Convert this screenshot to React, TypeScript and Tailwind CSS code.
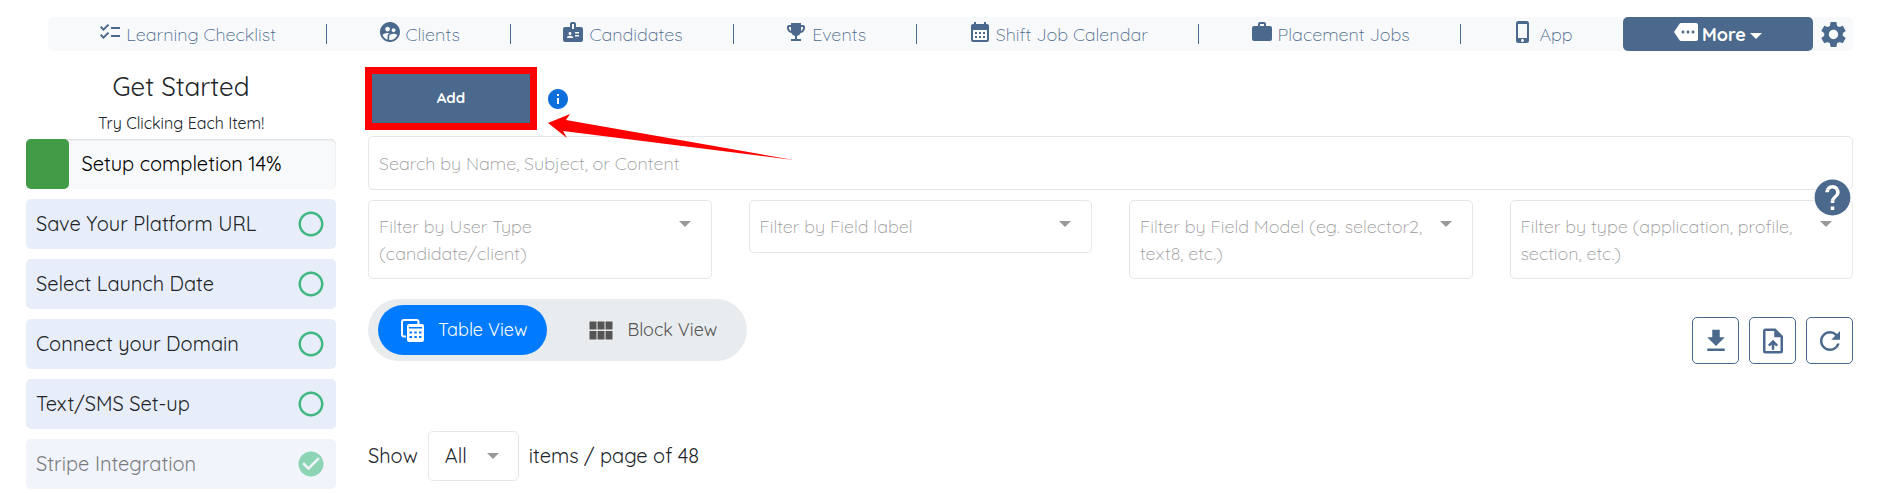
import type { ReactNode } from 'react';
import { useState } from 'react';
import {
  MdBadge,
  MdCalendarMonth,
  MdCheckCircle,
  MdChecklist,
  MdEmojiEvents,
  MdFileDownload,
  MdHelp,
  MdInfo,
  MdMore,
  MdPhoneIphone,
  MdRadioButtonUnchecked,
  MdRefresh,
  MdSettings,
  MdSupervisedUserCircle,
} from 'react-icons/md';

const navItems = [
  { label: 'Learning Checklist', icon: <MdChecklist size={24} /> },
  { label: 'Clients', icon: <MdSupervisedUserCircle size={24} /> },
  { label: 'Candidates', icon: <MdBadge size={24} /> },
  { label: 'Events', icon: <MdEmojiEvents size={24} /> },
  { label: 'Shift Job Calendar', icon: <MdCalendarMonth size={24} /> },
  { label: 'Placement Jobs', icon: <BriefcaseIcon /> },
  { label: 'App', icon: <MdPhoneIphone size={24} /> },
];

const setupSteps = [
  { label: 'Save Your Platform URL', done: false },
  { label: 'Select Launch Date', done: false },
  { label: 'Connect your Domain', done: false },
  { label: 'Text/SMS Set-up', done: false },
  { label: 'Stripe Integration', done: true },
];

const filters = [
  { id: 'user-type', label: 'Filter by User Type (candidate/client)' },
  { id: 'field-label', label: 'Filter by Field label' },
  { id: 'field-model', label: 'Filter by Field Model (eg. selector2, text8, etc.)' },
  { id: 'type', label: 'Filter by type (application, profile, section, etc.)' },
];

function BriefcaseIcon() {
  return (
    <svg width="24" height="24" viewBox="0 0 24 24" fill="currentColor">
      <path d="M10 2h4a2 2 0 0 1 2 2v2h4a2 2 0 0 1 2 2v11a2 2 0 0 1-2 2H4a2 2 0 0 1-2-2V8a2 2 0 0 1 2-2h4V4a2 2 0 0 1 2-2m4 4V4h-4v2z" />
    </svg>
  );
}

function TableMultipleIcon() {
  return (
    <svg width="27" height="27" viewBox="0 0 27 27" fill="none" stroke="currentColor">
      <path d="M8 19.500H6a2 2 0 0 1-2-2V5a2 2 0 0 1 2-2h12.500a2 2 0 0 1 2 2v2" strokeWidth="2" />
      <path
        fill="currentColor"
        fillRule="evenodd"
        stroke="none"
        d="M11 7h13a2 2 0 0 1 2 2v14a2 2 0 0 1-2 2H11a2 2 0 0 1-2-2V9a2 2 0 0 1 2-2m0 3v1.500h13V10zm.5 4.500v2h2.500v-2zm4.800 0v2h2.500v-2zm4.700 0v2h2.500v-2zm-9.500 4.500v2h2.500v-2zm4.800 0v2h2.500v-2zm4.700 0v2h2.500v-2z"
      />
    </svg>
  );
}

function BlocksIcon() {
  return (
    <svg width="27" height="27" viewBox="0 0 27 27" fill="currentColor">
      <path d="M2.500 4.500h7v8h-7zM10.500 4.500h7v8h-7zM18.500 4.500h7v8h-7zM2.500 14h7v8.500h-7zM10.500 14h7v8.500h-7zM18.500 14h7v8.500h-7z" />
    </svg>
  );
}

function UploadFileIcon() {
  return (
    <svg width="30" height="30" viewBox="0 0 24 24" fill="currentColor">
      <path d="M14 2H6a2 2 0 0 0-2 2v16a2 2 0 0 0 2 2h12a2 2 0 0 0 2-2V8zm4 18H6V4h7v5h5zM8 15l1.400 1.400L11 14.800V19h2v-4.200l1.600 1.600L16 15l-4-4z" />
    </svg>
  );
}

function Caret({ className }: { className: string }) {
  return (
    <svg width="12" height="6" viewBox="0 0 12 6" fill="currentColor" className={className}>
      <path d="M0 0h12L6 6z" />
    </svg>
  );
}

function ActionButton({ label, children }: { label: string; children: ReactNode }) {
  return (
    <button
      type="button"
      aria-label={label}
      className="flex size-[47px] items-center justify-center rounded-[5px] border border-[#4b698c] text-[#4b698c]"
    >
      {children}
    </button>
  );
}

function TopNav() {
  return (
    <nav className="ml-[22px] flex h-[34px] items-stretch rounded-[5px] bg-[#f8f9fb] text-[#4b698c]">
      {navItems.map((item, index) => (
        <div key={item.label} className="flex flex-auto items-center">
          <a href="#" className="flex flex-auto items-center justify-center gap-1 text-lg font-light">
            <span className="pb-1">{item.icon}</span>
            <span className="whitespace-nowrap pt-0.5">{item.label}</span>
          </a>
          {index < navItems.length - 1 ? <span className="h-5 w-px bg-[#4b698c]" /> : null}
        </div>
      ))}
      <button
        type="button"
        className="flex w-[190px] items-center justify-center gap-1 rounded-[5px] bg-[#4b698c] text-lg font-bold text-white"
      >
        <MdMore size={24} className="mb-1" />
        <span className="pt-0.5">More</span>
        <Caret className="mt-1" />
      </button>
      <button type="button" aria-label="Settings" className="flex w-10 items-center justify-center">
        <MdSettings size={31} />
      </button>
    </nav>
  );
}

function Sidebar() {
  return (
    <aside className="w-[310px] shrink-0">
      <h2 className="text-center text-[26px] leading-[40px]">Get Started</h2>
      <p className="pt-1 pb-1 text-center text-base leading-6">Try Clicking Each Item!</p>
      <div className="flex h-[50px] items-center rounded-[5px] bg-[#f8f9fb] text-xl text-black shadow-[inset_0_1px_2px_rgba(0,0,0,0.12)]">
        <div className="h-full w-[14%] rounded-[5px] bg-[#429b46]" />
        <span className="pl-3">Setup completion 14%</span>
      </div>
      <ul className="mt-[10px] flex flex-col gap-[10px]">
        {setupSteps.map((step) => (
          <li key={step.label}>
            <a
              href="#"
              className={`flex h-[50px] items-center justify-between rounded-[5px] bg-[#e8eef9] px-[10px] text-xl ${step.done ? 'opacity-60' : ''}`}
            >
              {step.label}
              {step.done ? (
                <MdCheckCircle size={30} className="text-[#41b883]" />
              ) : (
                <MdRadioButtonUnchecked size={30} className="text-[#41b883]" />
              )}
            </a>
          </li>
        ))}
      </ul>
    </aside>
  );
}

export default function App() {
  const [view, setView] = useState<'table' | 'block'>('table');

  return (
    <div className="min-h-screen bg-white pt-[17px] pr-[38px] pl-[26px] font-['Quicksand','Lato',sans-serif] text-[#212529]">
      <TopNav />

      <div className="mt-4 flex items-start gap-8">
        <Sidebar />

        <main className="min-w-0 flex-1">
          <div className="relative flex items-center gap-[9px]">
            <button
              type="button"
              className="-ml-[3px] h-[63px] w-[172px] border-[7px] border-[#ff0000] bg-[#4b698c] text-[15px] font-bold text-white"
            >
              Add
            </button>
            <MdInfo size={24} className="text-[#0d6fdb]" />
            <svg
              width="246"
              height="46"
              viewBox="0 0 246 46"
              className="pointer-events-none absolute top-[47px] left-[180px] z-10"
            >
              <path fill="#ff0000" d="M0 9 22 0l-4 6 228 40L15 17l4 7z" />
            </svg>
          </div>

          <input
            type="search"
            aria-label="Search"
            placeholder="Search by Name, Subject, or Content"
            className="mt-[6px] block h-[54px] w-full rounded-[5px] border border-[#e6e6e6] px-[10px] text-lg font-light placeholder:text-[#999999]"
          />

          <div className="mt-[10px] grid grid-cols-4 items-start gap-[37px]">
            {filters.map((filter) => (
              <div
                key={filter.id}
                className="relative flex min-h-[53px] justify-between rounded-[5px] border border-[#e6e6e6] pt-3 pb-[11px] pl-[10px] pr-5 text-[#999999]"
              >
                <label htmlFor={filter.id} className="w-[290px] text-lg font-light leading-[27px]">
                  {filter.label}
                </label>
                <Caret className="mt-2 shrink-0" />
                <select id={filter.id} className="absolute inset-0 size-full opacity-0" />
              </div>
            ))}
          </div>

          <div className="mt-5 flex items-end justify-between">
            <div className="mb-[3px] flex gap-5 rounded-[31px] bg-[#e9ecef] px-[10px] py-[6px] text-lg">
              <button
                type="button"
                onClick={() => setView('table')}
                className={`flex h-[50px] items-center gap-[13px] rounded-[25px] px-5 ${view === 'table' ? 'bg-[#007bff] text-white' : 'text-[#555555]'}`}
              >
                <TableMultipleIcon />
                Table View
              </button>
              <button
                type="button"
                onClick={() => setView('block')}
                className={`flex h-[50px] items-center gap-[13px] rounded-[25px] px-5 ${view === 'block' ? 'bg-[#007bff] text-white' : 'text-[#555555]'}`}
              >
                <BlocksIcon />
                Block View
              </button>
            </div>
            <div className="flex gap-[10px]">
              <ActionButton label="Download">
                <MdFileDownload size={30} />
              </ActionButton>
              <ActionButton label="Upload file">
                <UploadFileIcon />
              </ActionButton>
              <ActionButton label="Refresh">
                <MdRefresh size={30} />
              </ActionButton>
            </div>
          </div>

          <div className="mt-[67px] flex items-center gap-[10px] text-xl">
            <label htmlFor="page-size">Show</label>
            <div className="relative">
              <select
                id="page-size"
                className="h-[50px] w-[91px] appearance-none rounded-[5px] border border-[#e6e6e6] bg-white pl-4"
              >
                <option>All</option>
              </select>
              <Caret className="pointer-events-none absolute top-[22px] right-5 text-[#999999]" />
            </div>
            <span>items / page of 48</span>
          </div>
        </main>
      </div>

      <button
        type="button"
        aria-label="Help"
        className="fixed top-[176px] right-[37px] z-20 text-[#4b698c]"
      >
        <MdHelp size={43} />
      </button>
    </div>
  );
}
